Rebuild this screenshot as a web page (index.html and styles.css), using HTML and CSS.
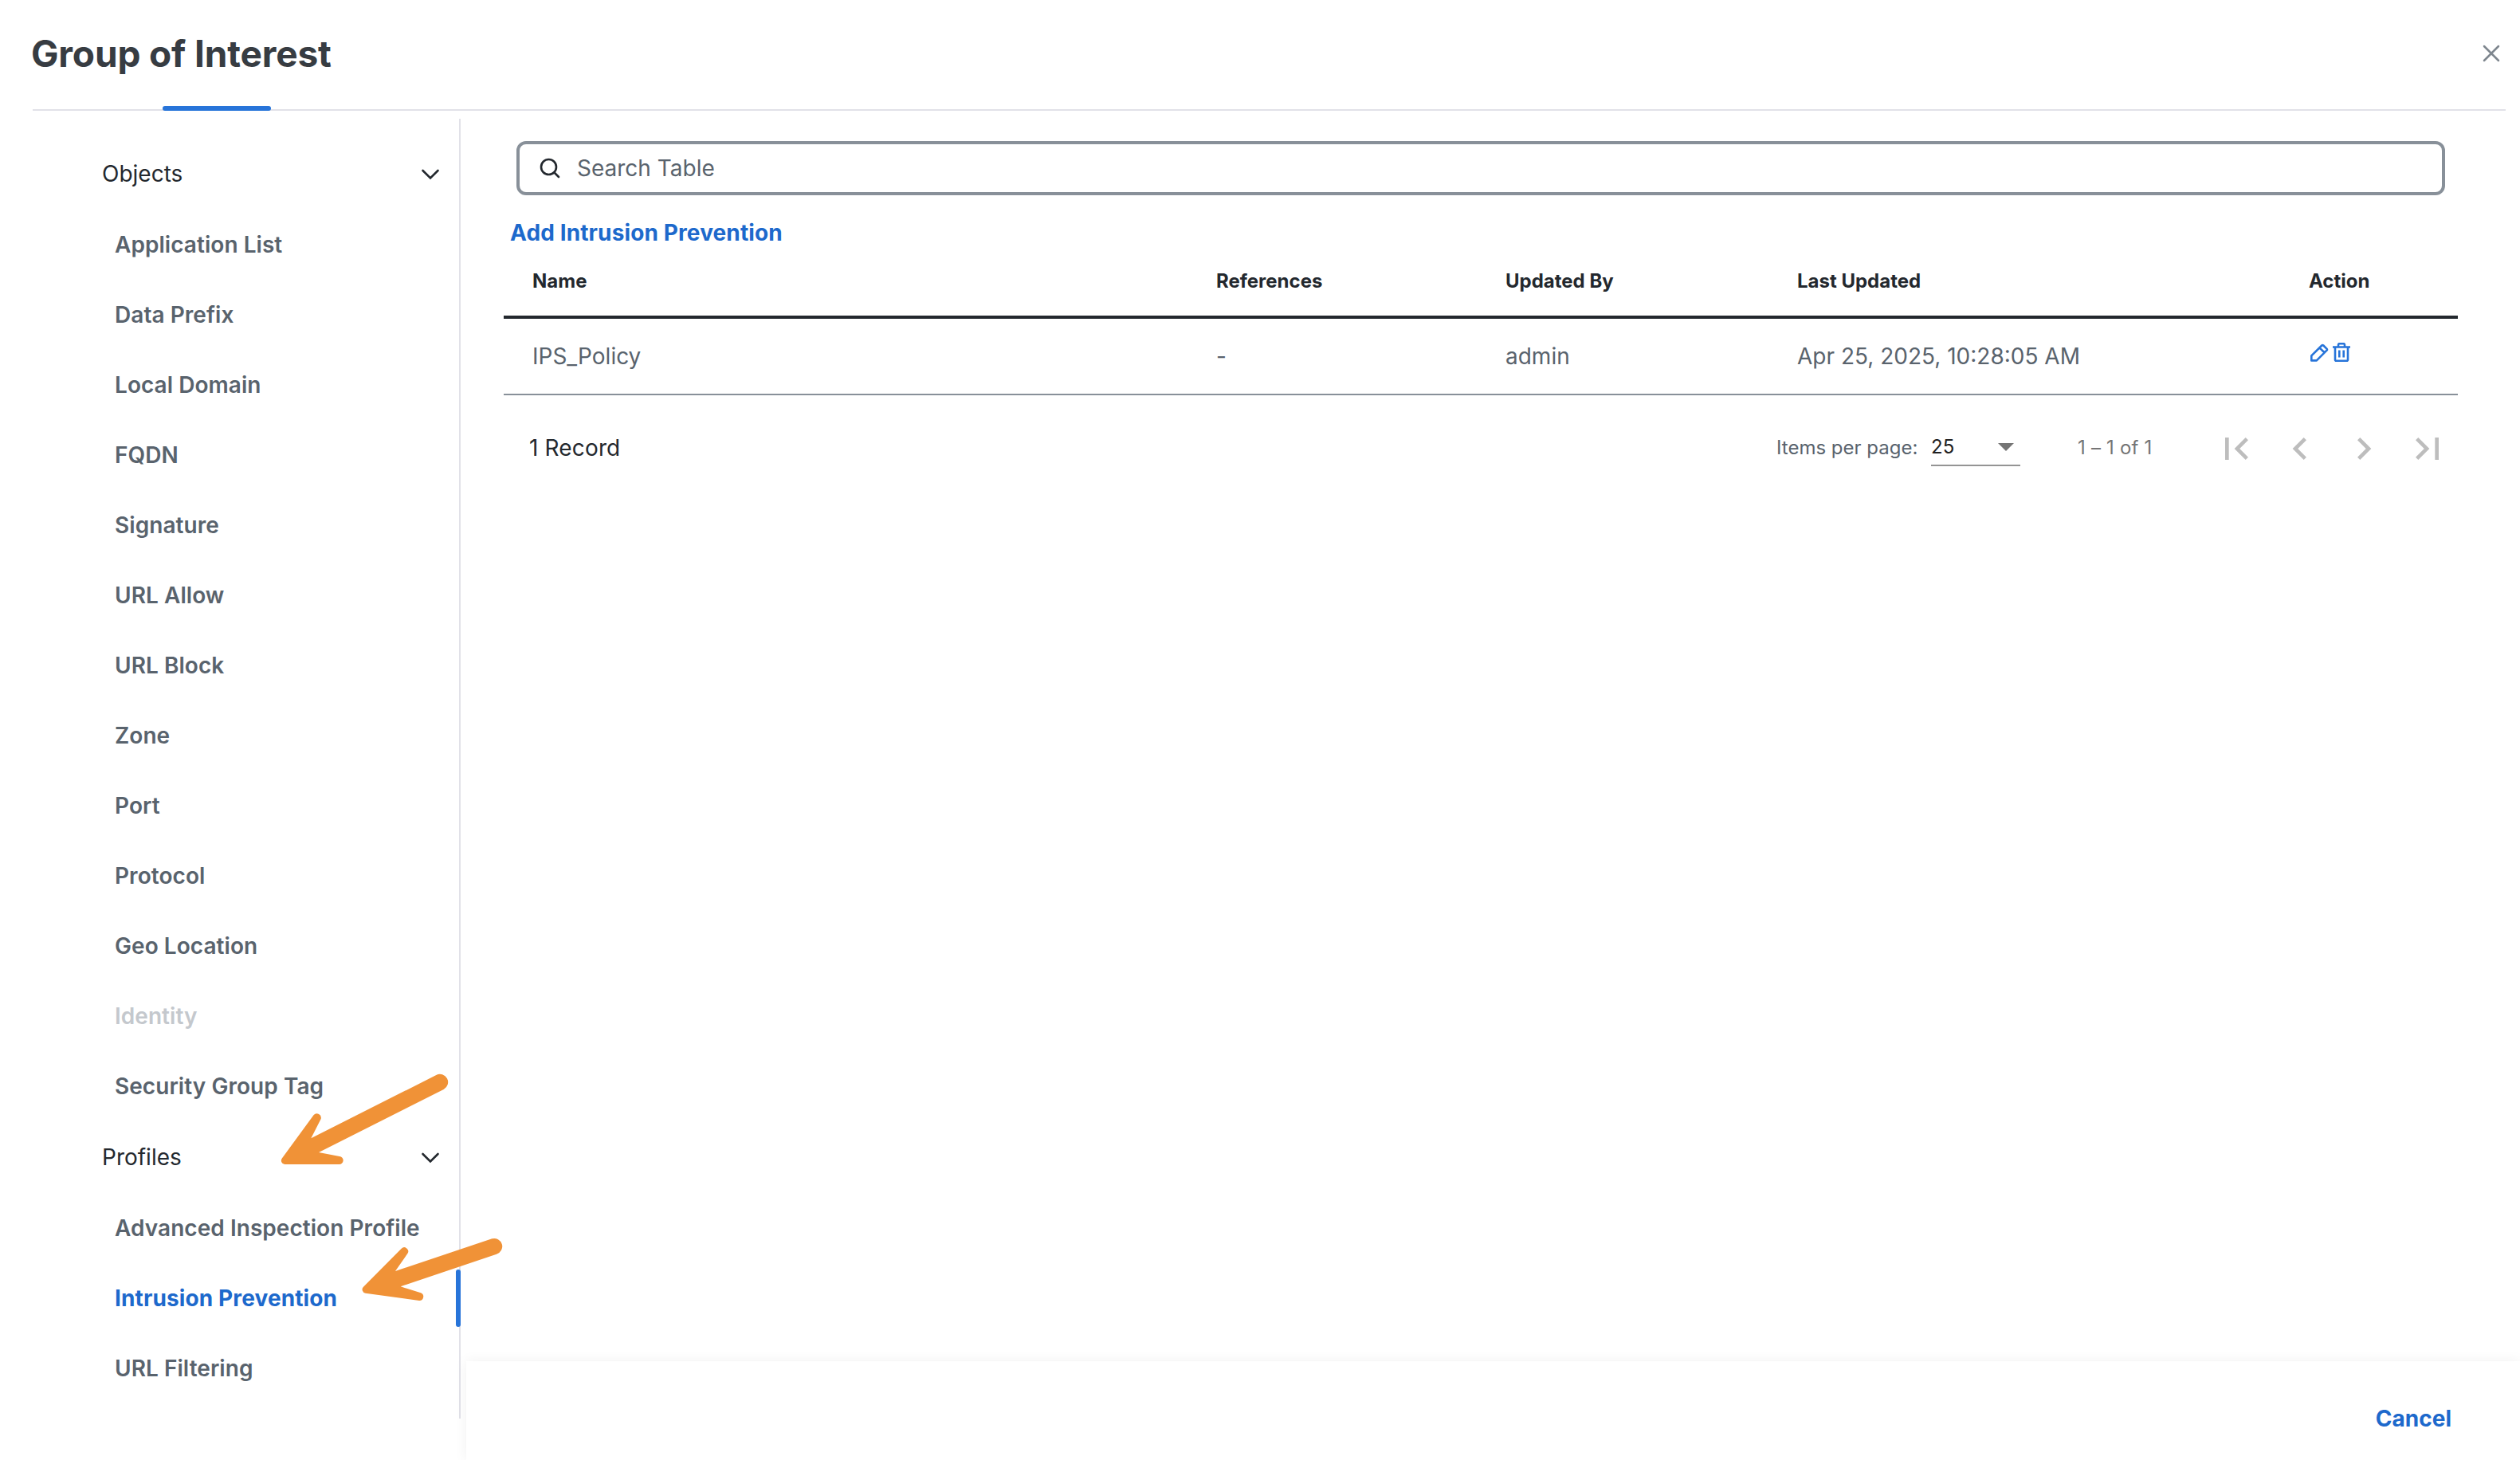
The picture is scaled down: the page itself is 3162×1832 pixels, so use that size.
FILE: index.html
```html
<!DOCTYPE html>
<html lang="en">
<head>
    <meta charset="UTF-8">
    <meta name="viewport" content="width=device-width, initial-scale=1.0">
    <title>Group of Interest</title>
    <link rel="stylesheet" href="styles.css">
</head>
<body>
    <header class="header">
        <h1>Group of Interest</h1>
        <svg class="close-icon" viewBox="0 0 24 24"><path d="M3 3l18 18M21 3L3 21"/></svg>
        <div class="tab-indicator"></div>
    </header>

    <div class="content">
        <nav class="sidebar">
            <div class="group-title">
                <span>Objects</span>
                <svg class="chevron" viewBox="0 0 24 14"><path d="M2.5 2l9.5 9.5L21.5 2"/></svg>
            </div>
            <ul>
                <li>Application List</li>
                <li>Data Prefix</li>
                <li>Local Domain</li>
                <li>FQDN</li>
                <li>Signature</li>
                <li>URL Allow</li>
                <li>URL Block</li>
                <li>Zone</li>
                <li>Port</li>
                <li>Protocol</li>
                <li>Geo Location</li>
                <li class="disabled">Identity</li>
                <li>Security Group Tag</li>
            </ul>
            <div class="group-title">
                <span>Profiles</span>
                <svg class="chevron" viewBox="0 0 24 14"><path d="M2.5 2l9.5 9.5L21.5 2"/></svg>
            </div>
            <ul>
                <li>Advanced Inspection Profile</li>
                <li class="active">Intrusion Prevention</li>
                <li>URL Filtering</li>
            </ul>
        </nav>

        <main class="main">
            <div class="search-box">
                <svg class="search-icon" viewBox="0 0 26 26"><circle cx="11.5" cy="11.5" r="9.5"/><path d="M18.5 18.5l5.5 5.5"/></svg>
                <span>Search Table</span>
            </div>
            <a class="add-link">Add Intrusion Prevention</a>

            <div class="table">
                <div class="row table-head">
                    <span>Name</span>
                    <span>References</span>
                    <span>Updated By</span>
                    <span>Last Updated</span>
                    <span>Action</span>
                </div>
                <div class="row table-row">
                    <span>IPS_Policy</span>
                    <span>-</span>
                    <span>admin</span>
                    <span>Apr 25, 2025, 10:28:05 AM</span>
                    <span class="actions">
                        <svg class="edit-icon" viewBox="0 0 24 24"><path d="M2.3 22.400v-6L15.300 3.500q1-.9 2 0l4.200 4.200q.9 1 0 2L8.800 22.400zM12.500 6.300l6.200 6.200"/></svg>
                        <svg class="delete-icon" viewBox="0 0 24 26"><path d="M1 5.500h22M4 5.500v15.700q0 1.500 1.500 1.500h13q1.500 0 1.500-1.500V5.500M8 5.500V2.700q0-1.500 1.500-1.500h5q1.500 0 1.500 1.500v2.800M9.300 9.500v9M14.700 9.500v9"/></svg>
                    </span>
                </div>
            </div>

            <div class="paginator">
                <span class="record-count">1 Record</span>
                <span class="page-label">Items per page:</span>
                <div class="page-select">
                    <span>25</span>
                    <i class="arrow-down"></i>
                </div>
                <span class="range">1 – 1 of 1</span>
                <div class="page-buttons">
                    <svg viewBox="0 0 24 24"><path d="M18.41 16.59L13.82 12l4.59-4.59L17 6l-6 6 6 6zM6 6h2v12H6z"/></svg>
                    <svg viewBox="0 0 24 24"><path d="M15.41 7.41L14 6l-6 6 6 6 1.41-1.41L10.83 12z"/></svg>
                    <svg viewBox="0 0 24 24"><path d="M10 6L8.59 7.41 13.17 12l-4.58 4.59L10 18l6-6z"/></svg>
                    <svg viewBox="0 0 24 24"><path d="M5.59 7.41L10.18 12l-4.59 4.59L7 18l6-6-6-6zM16 6h2v12h-2z"/></svg>
                </div>
            </div>
        </main>
    </div>

    <footer class="footer">
        <a class="cancel">Cancel</a>
    </footer>

    <!-- Arrows pointing at the Profiles menu -->
    <svg class="arrows" viewBox="0 0 1020 1050">
        <path d="M682 87L211 325L248 252A16 16 0 0 0 221 237L102 400A14 14 0 0 0 112 423L316 423A15 15 0 0 0 318 393L240 378L710 141A30 30 0 0 0 682 87Z"/>
        <path d="M892 703L528 825L574 759A15 15 0 0 0 551 740L408 884A14 14 0 0 0 416 908L618 936A15 15 0 0 0 624 907L548 883L909 761A30 30 0 0 0 892 703Z"/>
    </svg>
</body>
</html>
```
FILE: styles.css
```css
* {
    box-sizing: border-box;
}

body {
    font-family: Inter, "Liberation Sans", sans-serif;
    font-size: 28px;
    line-height: 34px;
    height: 1832px;
    margin: 0;
    color: #23282e;
    background-color: #fff;
    position: relative;
    overflow: hidden;
}

svg {
    display: block;
    fill: none;
}

/* Header */
.header {
    display: flex;
    align-items: center;
    justify-content: space-between;
    height: 139px;
    margin: 0 18px 0 41px;
    padding: 0 6px 3px 0;
    border-bottom: 2px solid #e1e1e8;
    position: relative;
}

.header h1 {
    margin: 0 0 0 -2px;
    font-size: 46px;
    font-weight: 700;
    line-height: 56px;
    letter-spacing: -0.15px;
    color: #373c42;
}

.close-icon {
    width: 24px;
    height: 24px;
    stroke: #7e868e;
    stroke-width: 2.5;
    stroke-linecap: round;
}

.tab-indicator {
    position: absolute;
    left: 163px;
    bottom: -2px;
    width: 136px;
    height: 6px;
    border-radius: 3px;
    background-color: #2774d9;
}

/* Content */
.content {
    display: flex;
    height: 1693px;
    padding-top: 10px;
}

.sidebar {
    width: 578px;
    height: 1631px;
    padding: 24px 0 0 128px;
    border-right: 2px solid #e1e1e8;
}

.group-title {
    display: flex;
    align-items: center;
    justify-content: space-between;
    height: 90px;
    padding-right: 24px;
}

.chevron {
    width: 24px;
    height: 14px;
    margin-top: 2px;
    stroke: #23282e;
    stroke-width: 2.6;
    stroke-linecap: round;
}

.sidebar ul {
    list-style: none;
    margin: 0;
    padding: 0;
}

.sidebar li {
    display: flex;
    align-items: center;
    height: 88px;
    padding-left: 16px;
    font-weight: 600;
    letter-spacing: 0.05px;
    color: #59636d;
    position: relative;
}

.sidebar li.disabled {
    color: #c4c8cd;
}

.sidebar li.active {
    font-weight: 700;
    letter-spacing: 0.12px;
    color: #1d69cc;
}

.sidebar li.active::after {
    content: "";
    position: absolute;
    top: 8px;
    right: -2px;
    width: 6px;
    height: 72px;
    border-radius: 3px;
    background-color: #2774d9;
}

/* Table */
.main {
    flex: 1;
    padding: 28px 78px 0 54px;
}

.search-box {
    display: flex;
    align-items: center;
    height: 68px;
    margin: 0 16px;
    padding-left: 25px;
    border: 4px solid #889099;
    border-radius: 12px;
    color: #59636d;
}

.search-icon {
    width: 26px;
    height: 26px;
    margin-right: 21px;
    stroke: #23282e;
    stroke-width: 2.6;
    stroke-linecap: round;
}

.add-link {
    display: block;
    margin: 30px 0 0 8px;
    font-weight: 700;
    letter-spacing: 0.12px;
    color: #1d69cc;
}

.row {
    display: grid;
    grid-template-columns: 858px 363px 366px 642px 1fr;
    align-items: center;
    padding-left: 36px;
}

.table-head {
    height: 91px;
    padding-top: 1px;
    border-bottom: 4px solid #23282e;
    font-size: 24px;
    font-weight: 700;
}

.table-row {
    height: 96px;
    border-bottom: 2px solid #889099;
    color: #59636d;
}

.actions {
    display: flex;
    gap: 4px;
    margin: -8px 0 0 1px;
}

.actions svg {
    stroke: #2774d9;
    stroke-width: 2.6;
    stroke-linejoin: round;
}

.edit-icon {
    width: 24px;
    height: 24px;
}

.delete-icon {
    width: 24px;
    height: 26px;
}

/* Paginator */
.paginator {
    display: flex;
    align-items: center;
    height: 80px;
    margin-top: 31px;
    padding: 0 0 10px 32px;
    font-size: 24px;
}

.record-count {
    flex: 1;
    font-size: 28px;
    letter-spacing: 0.15px;
}

.page-label {
    width: 194px;
    color: #59636d;
}

.page-select {
    display: flex;
    align-items: center;
    justify-content: space-between;
    width: 112px;
    height: 46px;
    padding-right: 8px;
    border-bottom: 2px solid #949494;
    color: #212121;
}

.arrow-down {
    border-left: 10px solid transparent;
    border-right: 10px solid transparent;
    border-top: 10px solid #757575;
}

.range {
    width: 231px;
    padding-left: 72px;
    letter-spacing: 0.2px;
    color: #757575;
}

.page-buttons {
    display: flex;
    margin: 2px -2px 0 0;
}

.page-buttons svg {
    width: 80px;
    height: 56px;
    fill: #bdbdbd;
}

/* Footer */
.footer {
    display: flex;
    align-items: center;
    justify-content: flex-end;
    position: absolute;
    left: 585px;
    right: 0;
    bottom: 0;
    height: 124px;
    padding: 20px 86px 0 0;
    background-color: #fff;
    box-shadow: 0 0 16px rgba(0, 0, 0, 0.06);
}

.cancel {
    font-weight: 700;
    color: #1d69cc;
}

.arrows {
    position: absolute;
    left: 320px;
    top: 1320px;
    width: 340px;
    height: 350px;
    fill: #f09237;
}
```
